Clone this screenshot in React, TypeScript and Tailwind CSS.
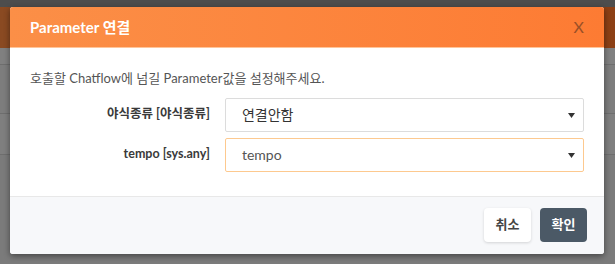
const font = { fontFamily: '"Lato", "Noto Sans CJK KR", sans-serif' }

function Row({ label, value, active }: { label: string; value: string; active?: boolean }) {
  return (
    <div className="flex items-center">
      <div className="w-[206px] pr-[15px] text-right text-[12.5px] font-bold text-[#3a3a3a]">{label}</div>
      <div
        className={`relative flex h-[34px] w-[361px] items-center rounded-[2px] border bg-white pl-[16px] text-[14px] ${
          active ? "border-[#fdc98f] text-[#555]" : "border-[#dcdcdc] text-[#333]"
        }`}
      >
        {value}
        <svg className="absolute right-[8px] top-[14px]" width="7" height="5" viewBox="0 0 7 5">
          <path d="M0 0 H7 L3.5 5 Z" fill="#333" />
        </svg>
      </div>
    </div>
  )
}

export default function App() {
  return (
    <div className="relative h-[264px] w-[615px] overflow-hidden bg-[#7b7b7b]" style={font}>
      <div className="h-[7px] bg-[#4d4d4d]" />
      <div className="h-[41px] bg-gradient-to-r from-[#8a4a22] to-[#8c3f14]" />
      <div className="h-[16px] bg-[#808080]" />
      <div className="h-[1px] bg-[#6e6e6e]" />
      <div className="h-[48px] bg-[#7d7d7d]" />
      <div className="h-[1px] bg-[#6e6e6e]" />
      <div className="h-[40px] bg-[#7f7f7f]" />
      <div className="h-[1px] bg-[#6e6e6e]" />

      <div className="absolute left-[10px] top-[7px] w-[594px] overflow-hidden rounded-[3px] bg-white shadow-[0_2px_6px_rgba(0,0,0,0.45)]">
        <div className="flex h-[41px] items-center justify-between border-b border-[#ffc59a] bg-gradient-to-r from-[#fb8f47] to-[#fd7b33] pl-[20px] pr-[20px]">
          <span className="text-[15px] font-bold text-white">Parameter 연결</span>
          <span className="text-[16px] text-[#9a5027]">X</span>
        </div>

        <div className="px-[20px] pb-[24px] pt-[21px]">
          <p className="text-[13px] text-[#555]">호출할 Chatflow에 넘길 Parameter값을 설정해주세요.</p>
          <div className="-ml-[10px] mt-[9px] flex flex-col gap-[6px]">
            <Row label="야식종류 [야식종류]" value="연결안함" />
            <Row label="tempo [sys.any]" value="tempo" active />
          </div>
        </div>

        <div className="flex h-[58px] items-center justify-end gap-[9px] border-t border-[#e8e8e8] bg-[#f7f8fa] pr-[17px]">
          <button className="h-[34px] w-[47px] rounded-[4px] bg-white text-[13px] font-semibold text-[#444] shadow-[0_1px_3px_rgba(0,0,0,0.15)]">
            취소
          </button>
          <button className="h-[34px] w-[47px] rounded-[4px] bg-[#4b5966] text-[13px] font-bold text-white">확인</button>
        </div>
      </div>
    </div>
  )
}
